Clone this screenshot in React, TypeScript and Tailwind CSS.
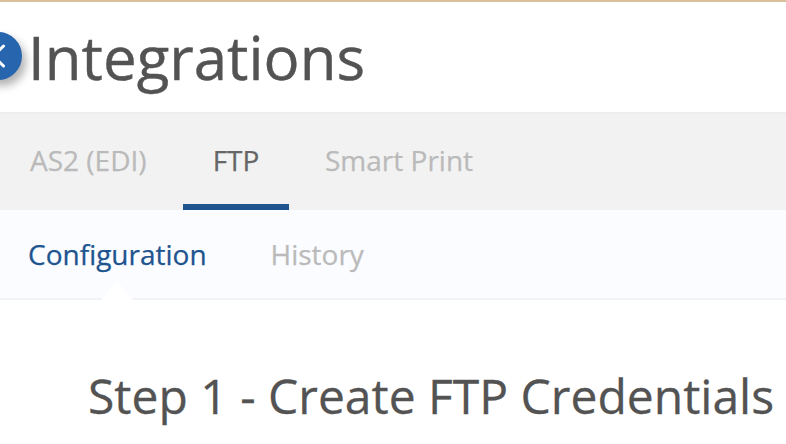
export default function App() {
  return (
    <main className="h-[444px] w-full overflow-hidden border-t-2 border-[#d8c09b] bg-white font-['Open_Sans',sans-serif] text-[#535353]">
      <header className="relative flex h-[110px] items-center pl-7">
        <button aria-label="Back" className="absolute top-[30px] -left-[26px] h-12 w-12 rounded-full bg-[#2766ae] shadow-[4px_6px_9px_rgba(0,0,0,0.3)]">
          <svg viewBox="0 0 48 48" className="h-12 w-12" fill="none" stroke="white" strokeWidth="3" strokeLinecap="round" strokeLinejoin="round"><path d="M29.5 14 19.5 24l10 10" /></svg>
        </button>
        <h1 className="text-[60px] leading-none [-webkit-text-stroke:0.4px_#535353]">Integrations</h1>
      </header>
      <nav className="flex h-[98px] border-t-2 border-[#eeeeee] bg-[#f2f2f2] text-[28px] text-[#bababa] [-webkit-text-stroke:0.25px_currentColor]">
        <a className="flex w-[183px] items-center pb-1 pl-[30px]">AS2 (EDI)</a>
        <a className="flex w-[106px] items-center justify-center border-b-[6px] border-[#20548f] pt-0.5 text-[#666666]">FTP</a>
        <a className="flex items-center pb-1 pl-9">Smart Print</a>
      </nav>
      <nav className="flex h-[90px] items-stretch border-b-2 border-[#f0f2f5] bg-[#fafcff] text-[28px] text-[#bababa] [-webkit-text-stroke:0.25px_currentColor]">
        <a className="relative flex w-[243px] items-center pl-7 text-[#20548f]">
          Configuration
          <span className="absolute -bottom-0.5 left-[101px] h-[19px] w-8 bg-white [clip-path:polygon(50%_0,100%_100%,0_100%)]" />
        </a>
        <a className="flex items-center pl-[27.5px]">History</a>
      </nav>
      <h2 className="pt-16 pl-[88px] text-[48px] leading-[64px] whitespace-nowrap [-webkit-text-stroke:0.3px_#535353]">Step 1 - Create FTP Credentials</h2>
    </main>
  );
}
